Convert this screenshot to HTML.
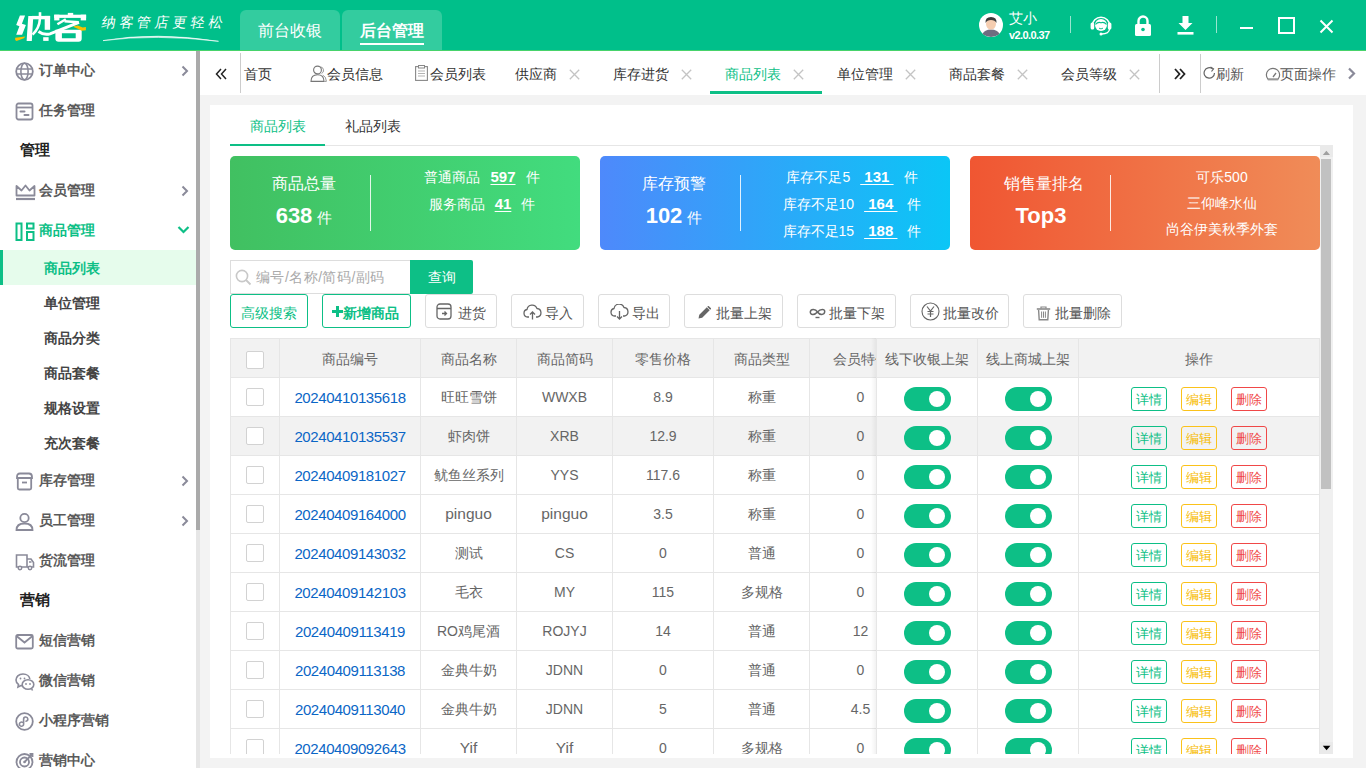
<!DOCTYPE html>
<html><head><meta charset="utf-8">
<style>
*{box-sizing:border-box;margin:0;padding:0}
html,body{width:1366px;height:768px;overflow:hidden;background:#f3f3f3;font-family:"Liberation Sans",sans-serif;font-size:14px;color:#333}
.abs{position:absolute}
#hdr{position:absolute;z-index:10;left:0;top:0;width:1366px;height:51px;background:#00bf8a}
.htab{position:absolute;top:10px;height:40px;width:100px;background:#33cc9f;border-radius:6px 6px 0 0;color:#fff;font-size:16px;text-align:center;line-height:42px}
#side{position:absolute;left:0;top:0;width:196px;height:768px;background:#fff}
#sbar{position:absolute;left:196px;top:50px;width:4px;height:718px;background:#aaa}
.si{position:absolute;left:0;width:196px;height:36px;line-height:37px;font-size:14px;font-weight:bold;color:#5a5a5a}
.si .t{position:absolute;left:39px}
.si svg.ic{position:absolute;left:15px;top:10px}
.si .chev{position:absolute;left:180px;top:13px}
.sh{position:absolute;left:20px;font-size:15px;font-weight:bold;color:#222}
.sub{position:absolute;left:0;width:196px;height:35px;line-height:35px;font-weight:bold;color:#444}
.sub .t{position:absolute;left:44px}
#tabbar{position:absolute;left:200px;top:50px;width:1166px;height:45px;background:#fff}
.tb{position:absolute;top:0;height:45px;line-height:48px;font-size:14px;color:#333}
.x{position:absolute;top:19px;width:11px;height:11px;margin-left:1px}
#card{position:absolute;left:210px;top:105px;width:1143px;height:653px;background:#fff}

.stat{position:absolute;top:156px;width:350px;height:94px;border-radius:5px;color:#fff}
.stat .c{position:absolute;text-align:center;white-space:nowrap}
.btn{position:absolute;top:294px;height:34px;border:1px solid #ddd;border-radius:3px;background:#fff;color:#555;font-size:14px;line-height:36px;white-space:nowrap}
.btn.g{border-color:#0dbf86;color:#0dbf86}
.btn svg{position:absolute}
.btn span{position:absolute}
table.tbl{position:absolute;left:230px;top:338px;width:1090px;border-collapse:collapse;table-layout:fixed}
.tbl td,.tbl th{border:1px solid #e6e6e6;height:39px;text-align:center;font-size:14px;color:#666;font-weight:normal;white-space:nowrap;overflow:hidden;padding:3px 0 0 0}
.tbl td{padding-top:0}
.tbl td.p4{padding-top:4px}
.tbl td.cj{padding-top:2px}
.tbl th{background:#f2f2f2}
.tbl a{color:#0b66c6;text-decoration:none;font-size:15px;letter-spacing:-0.4px}
.cb{display:inline-block;width:18px;height:18px;border:1px solid #d2d2d2;border-radius:2px;background:#fff;vertical-align:middle}
.tg{display:inline-block;width:47px;height:24px;border-radius:12px;background:#0dbf86;position:relative;vertical-align:middle}
.tg:after{content:"";position:absolute;left:25px;top:4px;width:16px;height:16px;border-radius:50%;background:#fff}
.ob{display:inline-block;width:36px;height:24px;border:1px solid;border-radius:3px;font-size:12.5px;line-height:24px;vertical-align:middle;margin:0 7px;overflow:hidden}
u.n{font-weight:bold;font-size:15px;text-underline-offset:2px;text-decoration-thickness:1px}
</style></head><body>
<div id="hdr">
  <svg class="abs" style="left:0;top:0" width="95" height="50" viewBox="0 0 95 50">
<g fill="#fff">
<polygon points="19.9,15.4 25.1,15.4 21.9,23.8 25.9,25.1 22.1,34.7 16.2,34.7 19.4,26.3 16.2,25.1"/>
<polygon points="28.3,15.9 33.3,15.9 31.8,40.9 26.6,40.9"/>
<rect x="38.7" y="12.2" width="2.6" height="5"/>
<rect x="32" y="15.9" width="18.1" height="3.4"/>
<rect x="44.7" y="15.9" width="5.4" height="13.9"/>
<rect x="43.2" y="37.2" width="5.4" height="3.7"/>
<rect x="67.8" y="12.9" width="5.4" height="2.5"/>
<rect x="54.2" y="14.7" width="31.9" height="3.2"/>
<rect x="54.2" y="14.7" width="5.2" height="5.7"/>
<rect x="80.7" y="14.7" width="5.4" height="5.7"/>
<path d="M55.4 29.8 H81.7 V38.5 Q81.7 41.7 78.5 41.7 H58.6 Q55.4 41.7 55.4 38.5Z M61.9 33.2 V38.2 H75.7 V33.2Z" fill-rule="evenodd"/>
</g>
<g stroke="#fff" fill="none">
<path d="M39.9 19 Q39.5 28 32.6 34.6" stroke-width="2.6"/>
<path d="M38.5 31.5 Q44 35.5 50 33.8 L79 22.4" stroke-width="2.9"/>
<path d="M57.4 24.3 L65.8 19.2" stroke-width="2.4"/>
<path d="M64.5 21.3 L78.6 22.2" stroke-width="2.6"/>
</g>
<g fill="#f9c000">
<polygon points="15.2,37.7 25.4,36.5 23.9,38.2 16.5,40.9 15.2,39.9"/>
<polygon points="73.7,26.3 77.7,25.6 82.7,27.6 85.9,27.1 85.9,30.3 81.7,30.8 77.7,28.8 73.7,27.1"/>
</g>
</svg>
  <div class="abs" style="left:100px;top:12px;font-size:14px;color:#fff;letter-spacing:3.8px;line-height:20px;transform:skewX(-10deg);transform-origin:0 100%">纳客管店更轻松</div>
  <svg class="abs" style="left:100px;top:32px" width="124" height="12"><path d="M3 8.6 Q56 -0.5 118.5 9.3 Q56 1.8 3 8.6Z" stroke="#fff" stroke-width="0.6" fill="#fff"/></svg>
  <div class="abs" style="left:0;top:50px;width:1366px;height:1px;background:#48d36b"></div>
  <div class="htab" style="left:240px">前台收银</div>
  <div class="htab" style="left:342px;font-weight:bold">后台管理<div class="abs" style="left:18px;top:33px;width:64px;height:2px;background:#fff"></div></div>
  <!-- avatar -->
  <svg class="abs" style="left:979px;top:13px" width="24" height="24" viewBox="0 0 24 24">
    <circle cx="12" cy="12" r="12" fill="#fff"/>
    <path d="M3.5 21 Q5.5 16.5 12 16.5 Q18.5 16.5 20.5 21 Q16.5 24 12 24 Q7.5 24 3.5 21Z" fill="#6f6c80"/>
    <ellipse cx="12" cy="11" rx="5" ry="5.5" fill="#f5cdb0"/>
    <path d="M6.5 10 Q6 4 12 4 Q18 4 17.5 10 Q16 7 12 7 Q8 7 6.5 10Z" fill="#3a3a3a"/>
  </svg>
  <div class="abs" style="left:1009px;top:9px;font-size:14px;color:#fff;line-height:18px">艾小</div>
  <div class="abs" style="left:1009px;top:28px;font-size:11px;font-weight:bold;color:#fff;line-height:14px;letter-spacing:-0.6px">v2.0.0.37</div>
  <div class="abs" style="left:1070px;top:16px;width:1px;height:17px;background:rgba(255,255,255,.6)"></div>
  <!-- headset -->
  <svg class="abs" style="left:1090px;top:14px" width="22" height="22" viewBox="0 0 22 22">
    <path d="M2.2 12 A8.8 8.8 0 0 1 19.8 12" stroke="#fff" stroke-width="1.6" fill="none"/>
    <rect x="0.6" y="8.5" width="3.6" height="7" rx="1.6" fill="#fff"/>
    <rect x="17.8" y="8.5" width="3.6" height="7" rx="1.6" fill="#fff"/>
    <circle cx="11" cy="11" r="6" fill="#fff"/>
    <path d="M5.5 10.5 Q8 7.5 11 8.8 Q14 7.5 16.5 10.5" stroke="#00bf8a" stroke-width="1.1" fill="none"/>
    <path d="M9 14.2 Q11 15.5 13 14.2" stroke="#00bf8a" stroke-width="0.9" fill="none"/>
    <path d="M19.6 15 Q19 20 11.5 20" stroke="#fff" stroke-width="1.4" fill="none"/>
    <circle cx="11" cy="20" r="1.5" fill="#fff"/>
  </svg>
  <!-- lock -->
  <svg class="abs" style="left:1134.5px;top:15px" width="16" height="21" viewBox="0.5 0 16 21">
    <path d="M4 9 V6 A4.5 4.5 0 0 1 13 6 V9" stroke="#fff" stroke-width="2.4" fill="none"/>
    <rect x="0.5" y="9" width="16" height="12" rx="1.5" fill="#fff"/>
    <circle cx="8.5" cy="14.5" r="1.8" fill="#00bf8a"/>
  </svg>
  <!-- download -->
  <svg class="abs" style="left:1177px;top:16px" width="17" height="19" viewBox="0 0 17 19">
    <path d="M5.5 0 H11.5 V7 H15.5 L8.5 14 L1.5 7 H5.5Z" fill="#fff"/>
    <rect x="0.5" y="16" width="16" height="2.6" fill="#fff"/>
  </svg>
  <div class="abs" style="left:1216px;top:16px;width:1px;height:17px;background:rgba(255,255,255,.6)"></div>
  <div class="abs" style="left:1240px;top:27px;width:13px;height:2px;background:#fff"></div>
  <div class="abs" style="left:1278px;top:17px;width:17px;height:17px;border:2px solid #fff"></div>
  <svg class="abs" style="left:1319px;top:19px" width="15" height="15" viewBox="0 0 15 15"><path d="M1.5 1.5 L13.5 13.5 M13.5 1.5 L1.5 13.5" stroke="#fff" stroke-width="2"/></svg>
</div>
<div id="side">
<div class="si" style="top:52px"><svg class="ic" width="19" height="19" viewBox="0 0 19 19"><circle cx="9.5" cy="9.5" r="8.3" stroke="#8a8a99" stroke-width="1.8" fill="none"/><ellipse cx="9.5" cy="9.5" rx="3.6" ry="8.3" stroke="#8a8a99" stroke-width="1.6" fill="none"/><path d="M1.5 7 H17.5 M1.5 12 H17.5" stroke="#8a8a99" stroke-width="1.6"/></svg><span class="t">订单中心</span><svg class="chev" width="10" height="12" viewBox="0 0 10 12"><path d="M2.5 1.5 L7 6 L2.5 10.5" stroke="#8a8a99" stroke-width="2" fill="none"/></svg></div>
<div class="si" style="top:92px"><svg class="ic" width="19" height="19" viewBox="0 0 19 19"><rect x="1.5" y="1.5" width="16" height="16" rx="2" stroke="#8a8a99" stroke-width="1.8" fill="none"/><path d="M1.5 5.5 H17.5" stroke="#8a8a99" stroke-width="1.8"/><path d="M5.5 9.5 H9.5 M9.5 13 H13.5" stroke="#8a8a99" stroke-width="2" stroke-linecap="round"/></svg><span class="t">任务管理</span></div>
<div class="sh" style="top:141px">管理</div>
<div class="si" style="top:172px"><svg class="ic" width="21" height="19" viewBox="0 0 21 19"><path d="M1.5 13.5 V4 L6.5 8.5 L10.5 3.5 L14.5 8.5 L19.5 4 V13.5Z" stroke="#8a8a99" stroke-width="1.8" fill="none" stroke-linejoin="round"/><path d="M1 17 H20" stroke="#8a8a99" stroke-width="2.2"/></svg><span class="t">会员管理</span><svg class="chev" width="10" height="12" viewBox="0 0 10 12"><path d="M2.5 1.5 L7 6 L2.5 10.5" stroke="#8a8a99" stroke-width="2" fill="none"/></svg></div>
<div class="si" style="top:212px;color:#0dbf86"><svg class="ic" width="20" height="19" viewBox="0 0 20 19"><rect x="1.5" y="1.5" width="5" height="16.5" stroke="#0dbf86" stroke-width="2" fill="none"/><rect x="12" y="1.5" width="6.5" height="5" stroke="#0dbf86" stroke-width="2" fill="none"/><rect x="12" y="10" width="6.5" height="8" stroke="#0dbf86" stroke-width="2" fill="none"/></svg><span class="t">商品管理</span><svg class="chev" style="left:177px;top:13px" width="13" height="10" viewBox="0 0 13 10"><path d="M1.5 2 L6.5 7 L11.5 2" stroke="#0dbf86" stroke-width="2.2" fill="none"/></svg></div>
<div class="abs" style="left:0;top:250px;width:196px;height:35px;background:#e6fcec"></div><div class="abs" style="left:0;top:250px;width:3px;height:35px;background:#0dbf86"></div>
<div class="sub" style="top:251px;color:#0dbf86"><span class="t">商品列表</span></div>
<div class="sub" style="top:286px"><span class="t">单位管理</span></div>
<div class="sub" style="top:321px"><span class="t">商品分类</span></div>
<div class="sub" style="top:356px"><span class="t">商品套餐</span></div>
<div class="sub" style="top:391px"><span class="t">规格设置</span></div>
<div class="sub" style="top:426px"><span class="t">充次套餐</span></div>
<div class="si" style="top:462px"><svg class="ic" width="19" height="19" viewBox="0 0 19 19"><path d="M2 5 Q2 1.5 5 1.5 H14 Q17 1.5 17 5 V6 H2Z" stroke="#8a8a99" stroke-width="1.8" fill="none"/><path d="M2.8 6 V16 Q2.8 17.5 4.3 17.5 H14.7 Q16.2 17.5 16.2 16 V6" stroke="#8a8a99" stroke-width="1.8" fill="none"/><path d="M7 10.5 H12" stroke="#8a8a99" stroke-width="1.8"/></svg><span class="t">库存管理</span><svg class="chev" width="10" height="12" viewBox="0 0 10 12"><path d="M2.5 1.5 L7 6 L2.5 10.5" stroke="#8a8a99" stroke-width="2" fill="none"/></svg></div>
<div class="si" style="top:502px"><svg class="ic" width="19" height="19" viewBox="0 0 19 19"><circle cx="9.5" cy="6" r="4.2" stroke="#8a8a99" stroke-width="1.8" fill="none"/><path d="M1.5 18 Q1.5 11.5 9.5 11.5 Q17.5 11.5 17.5 18Z" stroke="#8a8a99" stroke-width="1.8" fill="none"/></svg><span class="t">员工管理</span><svg class="chev" width="10" height="12" viewBox="0 0 10 12"><path d="M2.5 1.5 L7 6 L2.5 10.5" stroke="#8a8a99" stroke-width="2" fill="none"/></svg></div>
<div class="si" style="top:542px"><svg class="ic" width="20" height="19" viewBox="0 0 20 19"><path d="M1.5 3 H12 V15 H1.5Z" stroke="#8a8a99" stroke-width="1.6" fill="none"/><path d="M12 7 H16 L18.5 10.5 V15 H12" stroke="#8a8a99" stroke-width="1.6" fill="none"/><circle cx="5" cy="16" r="1.7" fill="#fff" stroke="#8a8a99" stroke-width="1.5"/><circle cx="15" cy="16" r="1.7" fill="#fff" stroke="#8a8a99" stroke-width="1.5"/><path d="M14 10 H16.5" stroke="#8a8a99" stroke-width="1.5"/></svg><span class="t">货流管理</span></div>
<div class="sh" style="top:591px">营销</div>
<div class="si" style="top:622px"><svg class="ic" width="19" height="19" viewBox="0 0 19 19"><rect x="1.2" y="3" width="16.6" height="13.5" rx="1.5" stroke="#8a8a99" stroke-width="1.8" fill="none"/><path d="M1.5 4 L9.5 10.5 L17.5 4" stroke="#8a8a99" stroke-width="1.8" fill="none"/></svg><span class="t">短信营销</span></div>
<div class="si" style="top:662px"><svg class="ic" width="20" height="19" viewBox="0 0 20 19"><path d="M8 2 C3.5 2 1 5 1 8 C1 10 2 11.5 3.5 12.5 L3 15 L6 13.5 C6.8 13.7 7.3 13.8 8 13.8" stroke="#8a8a99" stroke-width="1.6" fill="none"/><path d="M8 2 C12 2 14.5 4.5 14.8 7" stroke="#8a8a99" stroke-width="1.6" fill="none"/><ellipse cx="13" cy="12.5" rx="5.8" ry="4.8" stroke="#8a8a99" stroke-width="1.6" fill="none"/><path d="M16.5 16.5 L17.5 18.5" stroke="#8a8a99" stroke-width="1.6"/><circle cx="11" cy="12" r="0.9" fill="#8a8a99"/><circle cx="15" cy="12" r="0.9" fill="#8a8a99"/><circle cx="5.5" cy="6.5" r="0.9" fill="#8a8a99"/><circle cx="9.5" cy="6.5" r="0.9" fill="#8a8a99"/></svg><span class="t">微信营销</span></div>
<div class="si" style="top:702px"><svg class="ic" width="19" height="19" viewBox="0 0 19 19"><circle cx="9.5" cy="9.5" r="8.3" stroke="#8a8a99" stroke-width="1.8" fill="none"/><path d="M7.2 10.2 A2.1 2.1 0 1 0 8.6 12.2 V7.2 A2.1 2.1 0 1 1 11 9.2" stroke="#8a8a99" stroke-width="1.6" fill="none" stroke-linecap="round"/></svg><span class="t">小程序营销</span></div>
<div class="si" style="top:742px"><svg class="ic" width="20" height="19" viewBox="0 0 20 19"><circle cx="9.5" cy="10" r="8" stroke="#8a8a99" stroke-width="1.8" fill="none"/><circle cx="9.5" cy="10" r="4.5" stroke="#8a8a99" stroke-width="1.8" fill="none"/><circle cx="9.5" cy="10" r="1.3" fill="#8a8a99"/><path d="M9.5 10 L17 2.5 M14.5 2 H17.5 V5" stroke="#8a8a99" stroke-width="1.8" fill="none"/></svg><span class="t">营销中心</span></div>
</div>
<div id="sbar"></div><div class="abs" style="left:196px;top:530px;width:4px;height:238px;background:#e6e6e6"></div>
<div id="tabbar">
<svg class="abs" style="left:15px;top:18px" width="12" height="12" viewBox="0 0 12 12"><path d="M6 1 L1.5 6 L6 11 M11 1 L6.5 6 L11 11" stroke="#222" stroke-width="1.5" fill="none"/></svg>
<div class="abs" style="left:40px;top:3px;width:1px;height:40px;background:#ccc"></div>
<div class="tb" style="left:44px">首页</div>
<svg class="abs" style="left:110px;top:15px" width="17" height="17" viewBox="0 0 17 17"><path d="M10.5 1.8 A3.6 3.6 0 0 1 11.5 8.6 M12.8 10.2 Q16.2 11.5 16.4 16.4 H14.5" stroke="#999" stroke-width="1" fill="none"/><circle cx="7.5" cy="5" r="3.9" stroke="#777" stroke-width="1.1" fill="#fff"/><path d="M1 16.4 Q1 9.8 7.5 9.8 Q14 9.8 14 16.4Z" stroke="#777" stroke-width="1.1" fill="#fff"/></svg><div class="tb" style="left:127px">会员信息</div>
<svg class="abs" style="left:215px;top:15px" width="13" height="16" viewBox="0 0 13 16"><rect x="0.6" y="1.6" width="11.8" height="13.8" stroke="#888" stroke-width="1.1" fill="none"/><rect x="3.5" y="0.5" width="6" height="2.5" fill="#fff" stroke="#888" stroke-width="1"/><path d="M3 6 H10 M3 8.5 H10 M3 11 H10" stroke="#aaa" stroke-width="0.9"/></svg><div class="tb" style="left:230px">会员列表</div>
<div class="tb" style="left:315px">供应商</div><svg class="x" style="left:368px" width="11" height="11" viewBox="0 0 11 11"><path d="M0.8 0.8 L10.2 10.2 M10.2 0.8 L0.8 10.2" stroke="#c4c4c4" stroke-width="1.3"/></svg>
<div class="tb" style="left:413px">库存进货</div><svg class="x" style="left:480px" width="11" height="11" viewBox="0 0 11 11"><path d="M0.8 0.8 L10.2 10.2 M10.2 0.8 L0.8 10.2" stroke="#c4c4c4" stroke-width="1.3"/></svg>
<div class="tb" style="left:525px;color:#0dbf86">商品列表</div><svg class="x" style="left:592px" width="11" height="11" viewBox="0 0 11 11"><path d="M0.8 0.8 L10.2 10.2 M10.2 0.8 L0.8 10.2" stroke="#c4c4c4" stroke-width="1.3"/></svg>
<div class="tb" style="left:637px">单位管理</div><svg class="x" style="left:704px" width="11" height="11" viewBox="0 0 11 11"><path d="M0.8 0.8 L10.2 10.2 M10.2 0.8 L0.8 10.2" stroke="#c4c4c4" stroke-width="1.3"/></svg>
<div class="tb" style="left:749px">商品套餐</div><svg class="x" style="left:816px" width="11" height="11" viewBox="0 0 11 11"><path d="M0.8 0.8 L10.2 10.2 M10.2 0.8 L0.8 10.2" stroke="#c4c4c4" stroke-width="1.3"/></svg>
<div class="tb" style="left:861px">会员等级</div><svg class="x" style="left:928px" width="11" height="11" viewBox="0 0 11 11"><path d="M0.8 0.8 L10.2 10.2 M10.2 0.8 L0.8 10.2" stroke="#c4c4c4" stroke-width="1.3"/></svg>
<div class="abs" style="left:510px;top:41px;width:112px;height:3px;background:#0dbf86"></div>
<div class="abs" style="left:959px;top:4px;width:1px;height:39px;background:#ccc"></div>
<svg class="abs" style="left:974px;top:18px" width="12" height="12" viewBox="0 0 12 12"><path d="M1 1 L5.5 6 L1 11 M6 1 L10.5 6 L6 11" stroke="#222" stroke-width="1.8" fill="none"/></svg>
<div class="abs" style="left:1000px;top:4px;width:1px;height:39px;background:#ccc"></div>
<svg class="abs" style="left:1003px;top:16px" width="13" height="14" viewBox="0 0 13 14"><path d="M11.5 7 A5.2 5.2 0 1 1 9.5 2.8" stroke="#666" stroke-width="1.2" fill="none"/><path d="M7.5 1 L10.5 2.8 L8.5 5.5" stroke="#666" stroke-width="1.2" fill="none"/></svg><div class="tb" style="left:1016px;color:#555">刷新</div>
<svg class="abs" style="left:1065px;top:17px" width="16" height="14" viewBox="0 0 16 14"><path d="M3 12.2 A6.6 6.6 0 1 1 13 12.2 Z" stroke="#777" stroke-width="1.2" fill="none"/><path d="M2.8 12.6 H13.2" stroke="#999" stroke-width="1.6"/><path d="M8 10 L11 6" stroke="#777" stroke-width="1.3"/></svg><div class="tb" style="left:1080px;color:#555">页面操作</div>
<svg class="abs" style="left:1147px;top:17px" width="10" height="13" viewBox="0 0 10 13"><path d="M2 1.5 L7 6.5 L2 11.5" stroke="#8a8a99" stroke-width="2.2" fill="none"/></svg>
</div>
<div id="card"></div>
<div class="abs" style="left:250px;top:116px;line-height:20px;color:#0dbf86">商品列表</div><div class="abs" style="left:345px;top:116px;line-height:20px;color:#333">礼品列表</div><div class="abs" style="left:230px;top:145px;width:1101px;height:1px;background:#e6e6e6"></div><div class="abs" style="left:230px;top:144px;width:95px;height:2px;background:#0dbf86"></div>
<div class="stat" style="left:230px;background:linear-gradient(90deg,#41c061,#42dc7e)"><div class="c" style="left:0;width:148px;top:17px;font-size:16px;line-height:22px">商品总量</div><div class="c" style="left:0;width:148px;top:46px;font-size:22px;font-weight:bold;line-height:28px">638<span style="font-size:15px;font-weight:normal;margin-left:5px">件</span></div><div class="abs" style="left:140px;top:19px;width:1px;height:56px;background:rgba(255,255,255,.85)"></div><div class="c" style="left:152px;width:200px;top:11px;font-size:14px;line-height:20px">普通商品<u class="n" style="margin-left:10px">597</u><span style="margin-left:10px">件</span></div><div class="c" style="left:152px;width:200px;top:38px;font-size:14px;line-height:20px">服务商品<u class="n" style="margin-left:10px">41</u><span style="margin-left:10px">件</span></div></div>
<div class="stat" style="left:600px;background:linear-gradient(90deg,#4e89fb,#0bc6f6)"><div class="c" style="left:0;width:148px;top:17px;font-size:16px;line-height:22px">库存预警</div><div class="c" style="left:0;width:148px;top:46px;font-size:22px;font-weight:bold;line-height:28px">102<span style="font-size:15px;font-weight:normal;margin-left:5px">件</span></div><div class="abs" style="left:140px;top:19px;width:1px;height:56px;background:rgba(255,255,255,.85)"></div><div class="c" style="left:152px;width:200px;top:11px;font-size:14px;line-height:20px">库存不足5<u class="n" style="margin-left:10px">&nbsp;131&nbsp;</u><span style="margin-left:10px">件</span></div><div class="c" style="left:152px;width:200px;top:38px;font-size:14px;line-height:20px">库存不足10<u class="n" style="margin-left:10px">&nbsp;164&nbsp;</u><span style="margin-left:10px">件</span></div><div class="c" style="left:152px;width:200px;top:65px;font-size:14px;line-height:20px">库存不足15<u class="n" style="margin-left:10px">&nbsp;188&nbsp;</u><span style="margin-left:10px">件</span></div></div>
<div class="stat" style="left:970px;background:linear-gradient(90deg,#f05632,#f08c58)"><div class="c" style="left:0;width:148px;top:17px;font-size:16px;line-height:22px">销售量排名</div><div class="c" style="left:-3px;width:148px;top:46px;font-size:22px;font-weight:bold;line-height:28px">Top3</div><div class="abs" style="left:140px;top:19px;width:1px;height:56px;background:rgba(255,255,255,.85)"></div><div class="c" style="left:152px;width:200px;top:11px;font-size:14px;line-height:20px">可乐500</div><div class="c" style="left:152px;width:200px;top:37px;font-size:14px;line-height:20px">三仰峰水仙</div><div class="c" style="left:152px;width:200px;top:63px;font-size:14px;line-height:20px">尚谷伊美秋季外套</div></div>
<div class="abs" style="left:230px;top:260px;width:181px;height:34px;border:1px solid #ddd;border-right:none;background:#fff"></div><svg class="abs" style="left:235px;top:269px" width="17" height="17" viewBox="0 0 17 17"><circle cx="7" cy="7" r="5.6" stroke="#c8c8c8" stroke-width="1.6" fill="none"/><path d="M11 11 L15.5 15.5" stroke="#c8c8c8" stroke-width="1.8"/></svg><div class="abs" style="left:256px;top:267px;line-height:20px;color:#aaa;letter-spacing:0.45px">编号/名称/简码/副码</div><div class="abs" style="left:410px;top:260px;width:63px;height:34px;background:#0dbf86;border-radius:0 2px 2px 0;color:#fff;text-align:center;line-height:34px">查询</div>
<div class="btn g" style="left:230px;width:78px"><span style="left:10px">高级搜索</span></div><div class="btn g" style="left:322px;width:89px"><svg style="left:9px;top:11px" width="11" height="11" viewBox="0 0 11 11"><path d="M5.5 0 V11 M0 5.5 H11" stroke="#0dbf86" stroke-width="3"/></svg><span style="left:20px;font-weight:bold">新增商品</span></div><div class="btn" style="left:425px;width:72px"><svg style="left:10px;top:8px" width="16" height="17" viewBox="0 0 16 17"><rect x="1" y="1" width="14" height="15" rx="3" stroke="#666" stroke-width="1.3" fill="none"/><path d="M1 5.5 H15 M6 10.5 H10 M8.5 8.5 L10.5 10.5 L8.5 12.5" stroke="#666" stroke-width="1.3" fill="none"/></svg><span style="left:32px">进货</span></div><div class="btn" style="left:511px;width:73px"><svg style="left:11px;top:9px" width="19" height="16" viewBox="0 0 19 16"><path d="M6 13 H4.5 A3.8 3.8 0 0 1 4 5.5 A5.2 5.2 0 0 1 14 4.5 A4.3 4.3 0 0 1 14.5 13 H13" stroke="#666" stroke-width="1.3" fill="none"/><path d="M9.5 15.5 V8 M7 10.5 L9.5 8 L12 10.5" stroke="#666" stroke-width="1.3" fill="none"/></svg><span style="left:33px">导入</span></div><div class="btn" style="left:598px;width:72px"><svg style="left:11px;top:9px" width="19" height="16" viewBox="0 0 19 16"><path d="M6 12 H4.5 A3.8 3.8 0 0 1 4 4.5 A5.2 5.2 0 0 1 14 3.5 A4.3 4.3 0 0 1 14.5 12 H13" stroke="#666" stroke-width="1.3" fill="none"/><path d="M9.5 7 V15 M7 12.5 L9.5 15 L12 12.5" stroke="#666" stroke-width="1.3" fill="none"/></svg><span style="left:33px">导出</span></div><div class="btn" style="left:684px;width:99px"><svg style="left:13px;top:11px" width="13" height="13" viewBox="0 0 13 13"><path d="M0.5 12.5 L1.3 8.8 L8.8 1.3 L11.7 4.2 L4.2 11.7Z" fill="#666"/><path d="M9.8 0.3 L12.7 3.2" stroke="#666" stroke-width="1.6"/></svg><span style="left:31px">批量上架</span></div><div class="btn" style="left:797px;width:99px"><svg style="left:11px;top:12px" width="17" height="12" viewBox="0 0 17 12"><path d="M8.5 5 C6.5 1.8 1.8 1.5 1.3 4.8 C1 8 5.5 8.5 8.5 5 C11.5 1.5 16 1.8 15.7 4.8 C15.3 8.5 10.5 8 8.5 5" stroke="#666" stroke-width="1.5" fill="none"/><path d="M6.5 10.5 H10.5" stroke="#666" stroke-width="1.4"/></svg><span style="left:31px">批量下架</span></div><div class="btn" style="left:910px;width:99px"><svg style="left:10px;top:7px" width="19" height="19" viewBox="0 0 19 19"><circle cx="9.5" cy="9.5" r="8.5" stroke="#666" stroke-width="1.1" fill="none"/><path d="M6 4.5 L9.5 9 L13 4.5 M9.5 9 V15 M6.5 9.5 H12.5 M6.5 12 H12.5" stroke="#666" stroke-width="1.2" fill="none"/></svg><span style="left:32px">批量改价</span></div><div class="btn" style="left:1023px;width:99px"><svg style="left:12px;top:11px" width="15" height="15" viewBox="0 0 15 15"><path d="M0.8 3 H14.2" stroke="#888" stroke-width="1.6"/><path d="M5 2.5 V1 H10 V2.5" stroke="#888" stroke-width="1.2" fill="none"/><path d="M2.6 4 L3.2 13.8 H11.8 L12.4 4" stroke="#888" stroke-width="1.4" fill="none"/><path d="M5.6 5.5 V11.8 M7.5 5.5 V11.8 M9.4 5.5 V11.8" stroke="#888" stroke-width="1"/></svg><span style="left:31px">批量删除</span></div>
<div class="abs" style="left:210px;top:146px;width:1111px;height:608px;overflow:hidden"><div class="abs" style="left:-210px;top:-146px;width:1366px;height:768px"><table class="tbl"><colgroup><col style="width:49px"><col style="width:141px"><col style="width:96px"><col style="width:96px"><col style="width:101px"><col style="width:96px"><col style="width:67px"><col style="width:101px"><col style="width:101px"><col style="width:241px"></colgroup><tr><th><span class="cb"></span></th><th>商品编号</th><th>商品名称</th><th>商品简码</th><th>零售价格</th><th>商品类型</th><th style="text-align:left"><div style="width:101px;text-align:center">会员特价</div></th><th>线下收银上架</th><th>线上商城上架</th><th>操作</th></tr><tr><td><span class="cb"></span></td><td><a>20240410135618</a></td><td class="cj">旺旺雪饼</td><td>WWXB</td><td>8.9</td><td class="cj">称重</td><td style="text-align:left"><div style="width:101px;text-align:center">0</div></td><td class="p4"><span class="tg"></span></td><td class="p4"><span class="tg"></span></td><td class="p4"><span class="ob" style="border-color:#0dbf86;color:#0dbf86">详情</span><span class="ob" style="border-color:#fbc21a;color:#f7bb00">编辑</span><span class="ob" style="border-color:#f04848;color:#f04848">删除</span></td></tr><tr style="background:#f2f2f2"><td><span class="cb"></span></td><td><a>20240410135537</a></td><td class="cj">虾肉饼</td><td>XRB</td><td>12.9</td><td class="cj">称重</td><td style="text-align:left"><div style="width:101px;text-align:center">0</div></td><td class="p4"><span class="tg"></span></td><td class="p4"><span class="tg"></span></td><td class="p4"><span class="ob" style="border-color:#0dbf86;color:#0dbf86">详情</span><span class="ob" style="border-color:#fbc21a;color:#f7bb00">编辑</span><span class="ob" style="border-color:#f04848;color:#f04848">删除</span></td></tr><tr><td><span class="cb"></span></td><td><a>20240409181027</a></td><td class="cj">鱿鱼丝系列</td><td>YYS</td><td>117.6</td><td class="cj">称重</td><td style="text-align:left"><div style="width:101px;text-align:center">0</div></td><td class="p4"><span class="tg"></span></td><td class="p4"><span class="tg"></span></td><td class="p4"><span class="ob" style="border-color:#0dbf86;color:#0dbf86">详情</span><span class="ob" style="border-color:#fbc21a;color:#f7bb00">编辑</span><span class="ob" style="border-color:#f04848;color:#f04848">删除</span></td></tr><tr><td><span class="cb"></span></td><td><a>20240409164000</a></td><td style="font-size:15.5px">pinguo</td><td style="font-size:15.5px">pinguo</td><td>3.5</td><td class="cj">称重</td><td style="text-align:left"><div style="width:101px;text-align:center">0</div></td><td class="p4"><span class="tg"></span></td><td class="p4"><span class="tg"></span></td><td class="p4"><span class="ob" style="border-color:#0dbf86;color:#0dbf86">详情</span><span class="ob" style="border-color:#fbc21a;color:#f7bb00">编辑</span><span class="ob" style="border-color:#f04848;color:#f04848">删除</span></td></tr><tr><td><span class="cb"></span></td><td><a>20240409143032</a></td><td class="cj">测试</td><td>CS</td><td>0</td><td class="cj">普通</td><td style="text-align:left"><div style="width:101px;text-align:center">0</div></td><td class="p4"><span class="tg"></span></td><td class="p4"><span class="tg"></span></td><td class="p4"><span class="ob" style="border-color:#0dbf86;color:#0dbf86">详情</span><span class="ob" style="border-color:#fbc21a;color:#f7bb00">编辑</span><span class="ob" style="border-color:#f04848;color:#f04848">删除</span></td></tr><tr><td><span class="cb"></span></td><td><a>20240409142103</a></td><td class="cj">毛衣</td><td>MY</td><td>115</td><td class="cj">多规格</td><td style="text-align:left"><div style="width:101px;text-align:center">0</div></td><td class="p4"><span class="tg"></span></td><td class="p4"><span class="tg"></span></td><td class="p4"><span class="ob" style="border-color:#0dbf86;color:#0dbf86">详情</span><span class="ob" style="border-color:#fbc21a;color:#f7bb00">编辑</span><span class="ob" style="border-color:#f04848;color:#f04848">删除</span></td></tr><tr><td><span class="cb"></span></td><td><a>20240409113419</a></td><td class="cj">RO鸡尾酒</td><td>ROJYJ</td><td>14</td><td class="cj">普通</td><td style="text-align:left"><div style="width:101px;text-align:center">12</div></td><td class="p4"><span class="tg"></span></td><td class="p4"><span class="tg"></span></td><td class="p4"><span class="ob" style="border-color:#0dbf86;color:#0dbf86">详情</span><span class="ob" style="border-color:#fbc21a;color:#f7bb00">编辑</span><span class="ob" style="border-color:#f04848;color:#f04848">删除</span></td></tr><tr><td><span class="cb"></span></td><td><a>20240409113138</a></td><td class="cj">金典牛奶</td><td>JDNN</td><td>0</td><td class="cj">普通</td><td style="text-align:left"><div style="width:101px;text-align:center">0</div></td><td class="p4"><span class="tg"></span></td><td class="p4"><span class="tg"></span></td><td class="p4"><span class="ob" style="border-color:#0dbf86;color:#0dbf86">详情</span><span class="ob" style="border-color:#fbc21a;color:#f7bb00">编辑</span><span class="ob" style="border-color:#f04848;color:#f04848">删除</span></td></tr><tr><td><span class="cb"></span></td><td><a>20240409113040</a></td><td class="cj">金典牛奶</td><td>JDNN</td><td>5</td><td class="cj">普通</td><td style="text-align:left"><div style="width:101px;text-align:center">4.5</div></td><td class="p4"><span class="tg"></span></td><td class="p4"><span class="tg"></span></td><td class="p4"><span class="ob" style="border-color:#0dbf86;color:#0dbf86">详情</span><span class="ob" style="border-color:#fbc21a;color:#f7bb00">编辑</span><span class="ob" style="border-color:#f04848;color:#f04848">删除</span></td></tr><tr><td><span class="cb"></span></td><td><a>20240409092643</a></td><td style="font-size:15.5px">Yif</td><td style="font-size:15.5px">Yif</td><td>0</td><td class="cj">多规格</td><td style="text-align:left"><div style="width:101px;text-align:center">0</div></td><td class="p4"><span class="tg"></span></td><td class="p4"><span class="tg"></span></td><td class="p4"><span class="ob" style="border-color:#0dbf86;color:#0dbf86">详情</span><span class="ob" style="border-color:#fbc21a;color:#f7bb00">编辑</span><span class="ob" style="border-color:#f04848;color:#f04848">删除</span></td></tr></table><div class="abs" style="left:871px;top:338px;width:5px;height:430px;background:linear-gradient(90deg,rgba(0,0,0,0),rgba(0,0,0,.05))"></div></div></div>
<div class="abs" style="left:1320px;top:145px;width:13px;height:609px;background:#f0f0f0"></div><div class="abs" style="left:1320px;top:145px;width:13px;height:12px;background:#eaeaea"></div><div class="abs" style="left:1320px;top:742px;width:13px;height:12px;background:#eaeaea"></div><div class="abs" style="left:1321px;top:159px;width:10px;height:330px;background:#c1c1c1"></div><svg class="abs" style="left:1320px;top:149px" width="13" height="8" viewBox="0 0 13 8"><path d="M2.8 6 L6.4 1.8 L10 6Z" fill="#a0a0a0"/></svg><svg class="abs" style="left:1320px;top:744px" width="13" height="8" viewBox="0 0 13 8"><path d="M2.8 1.8 L10.4 1.8 L6.6 6.2Z" fill="#000"/></svg>
</body></html>
